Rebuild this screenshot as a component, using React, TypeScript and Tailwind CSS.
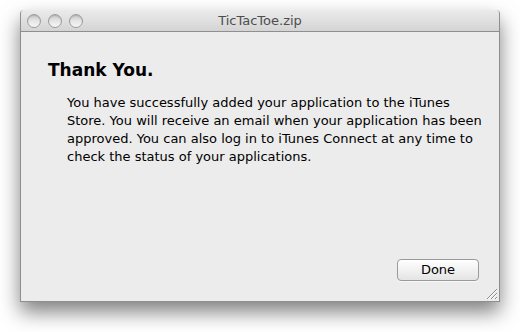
import React from "react";

const font = { fontFamily: '"DejaVu Sans", "Lucida Grande", sans-serif' };

function TrafficLight() {
  return (
    <div className="h-[14px] w-[14px] rounded-full border border-[#9c9c9c] bg-gradient-to-b from-[#c9c9c9] via-[#e6e6e6] to-[#f6f6f6] shadow-[inset_0_1px_1px_rgba(0,0,0,0.15)]" />
  );
}

function ResizeGrip() {
  return (
    <svg width="11" height="11" viewBox="0 0 11 11" className="absolute bottom-[2px] right-[2px]">
      <path d="M1 11 L11 1 M5 11 L11 5 M9 11 L11 9" stroke="#8a8a8a" strokeWidth="1" />
      <path d="M2 11 L11 2 M6 11 L11 6 M10 11 L11 10" stroke="#ffffff" strokeWidth="1" />
    </svg>
  );
}

export default function App() {
  return (
    <div className="h-[332px] w-[520px] bg-white pl-[20px] pt-[10px]" style={font}>
      <div className="relative flex h-[292px] w-[480px] flex-col overflow-hidden rounded-t-[4px] border border-t-0 border-[#8e8e8e] bg-[#ececec] shadow-[0_10px_20px_rgba(0,0,0,0.5)]">
        {/* title bar */}
        <div className="relative flex h-[22px] items-center border-b border-[#8f8f8f] bg-gradient-to-b from-[#ebebeb] to-[#d4d4d4] pl-[6px]">
          <div className="flex gap-[7px]">
            <TrafficLight />
            <TrafficLight />
            <TrafficLight />
          </div>
          <div className="absolute inset-0 flex items-center justify-center text-[13px] text-[#4d4d4d]">
            TicTacToe.zip
          </div>
        </div>

        {/* content */}
        <div className="flex flex-1 flex-col pl-[27px] pr-[17px] pt-[27px]">
          <h1 className="text-[17px] font-bold leading-[22px] text-black">Thank You.</h1>
          <p className="mt-[13px] pl-[19px] text-[13px] leading-[18px] text-black">
            You have successfully added your application to the iTunes Store. You will receive an email
            when your application has been approved. You can also log in to iTunes Connect at any time to
            check the status of your applications.
          </p>
          <div className="mt-auto flex justify-end pb-[20px] pr-[3px]">
            <button className="h-[22px] w-[82px] rounded-[4px] border border-[#9a9a9a] bg-gradient-to-b from-[#ffffff] to-[#e4e4e4] text-[13px] text-black shadow-[0_1px_0_rgba(255,255,255,0.6)]">
              Done
            </button>
          </div>
        </div>
        <ResizeGrip />
      </div>
    </div>
  );
}
